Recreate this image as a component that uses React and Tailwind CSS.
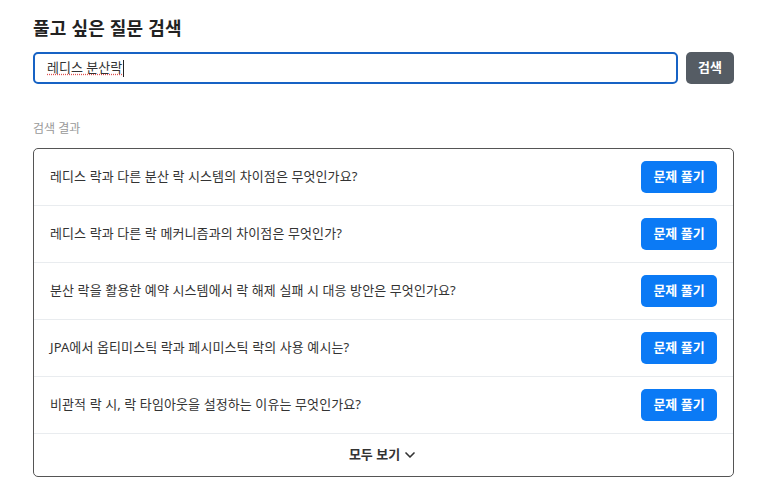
import { ChevronDown } from 'lucide-react';

const questions = [
    '레디스 락과 다른 분산 락 시스템의 차이점은 무엇인가요?',
    '레디스 락과 다른 락 메커니즘과의 차이점은 무엇인가?',
    '분산 락을 활용한 예약 시스템에서 락 해제 실패 시 대응 방안은 무엇인가요?',
    'JPA에서 옵티미스틱 락과 페시미스틱 락의 사용 예시는?',
    '비관적 락 시, 락 타임아웃을 설정하는 이유는 무엇인가요?',
];

// one result row
function QuestionRow({ text }) {
    return (
        <div className="flex h-[57px] items-center justify-between border-b border-[#e9ecef] pl-4 pr-4">
            <span className="text-[13px] tracking-[0.1px] text-[#333]">{text}</span>
            <button className="h-8 w-[76px] rounded-[5px] bg-[#0b7af5] text-[13px] font-bold text-white">문제 풀기</button>
        </div>
    );
}

export default function App() {
    return (
        <div
            className="min-h-[494px] bg-white px-[33px] pt-[15px]"
            style={{ fontFamily: '"Noto Sans", "Noto Sans CJK KR", sans-serif' }}
        >
            <h1 className="text-[18px] font-bold leading-[27px] tracking-[0.2px] text-[#222]">풀고 싶은 질문 검색</h1>
            <div className="mt-[10px] flex gap-2">
                <div className="flex h-8 flex-1 items-center rounded-[5px] border-2 border-[#1662c4] px-3">
                    <span className="text-[13px] text-[#333] underline decoration-[#e05050] decoration-dotted underline-offset-2">레디스 분산락</span>
                    <span className="ml-px h-[17px] w-px bg-[#222]" />
                </div>
                <button className="h-8 w-12 rounded-[5px] bg-[#555c64] text-[13px] font-bold text-white">검색</button>
            </div>
            <div className="mt-[36px] text-[12px] leading-[18px] text-[#999]">검색 결과</div>
            <div className="mt-[10px] overflow-hidden rounded-[5px] border border-[#555]">
                {questions.map((q) => <QuestionRow key={q} text={q} />)}
                <div className="flex h-[42px] items-center justify-center gap-0.5 text-[13px] font-bold text-[#333]">
                    모두 보기
                    <ChevronDown className="h-4 w-4" strokeWidth={2.5} />
                </div>
            </div>
        </div>
    );
}
